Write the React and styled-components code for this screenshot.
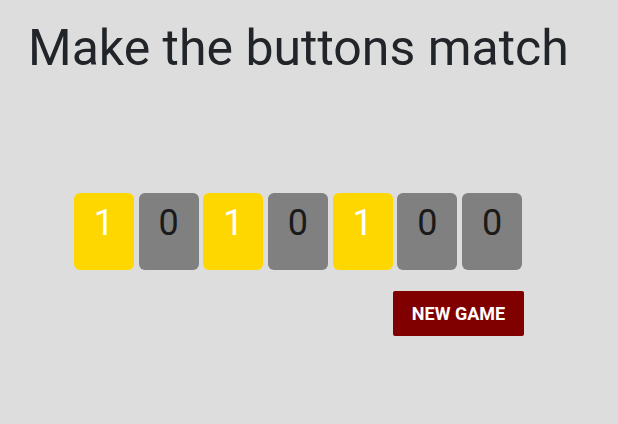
import styled, { createGlobalStyle } from "styled-components";

const GlobalStyle = createGlobalStyle`
  html, body {
    margin: 0;
    padding: 0;
    background: #dddddd;
    font-family: Roboto, "Liberation Sans", sans-serif;
  }
`;

const Page = styled.div`
  width: 618px;
  height: 424px;
  box-sizing: border-box;
  padding: 18px 0 0 28px;
`;

const Heading = styled.h1`
  margin: 0;
  font-size: 50px;
  font-weight: 400;
  line-height: 60px;
  white-space: nowrap;
  color: #212529;
`;

const Board = styled.div`
  margin: 115px 0 0 46px;
  width: 448px;
  display: flex;
  flex-direction: column;
  align-items: flex-end;
  gap: 21px;
`;

const Tiles = styled.div`
  display: flex;
  gap: 4.7px;
`;

const Tile = styled.button`
  width: 60px;
  height: 77px;
  border: none;
  border-radius: 6px;
  padding: 9px 0 0;
  display: flex;
  justify-content: center;
  align-items: flex-start;
  font-family: inherit;
  font-size: 36px;
  font-weight: 400;
  line-height: 1.2;
  background: ${(p) => (p.on ? "#ffd700" : "#808080")};
  color: ${(p) => (p.on ? "#ffffff" : "#1a1a1a")};
  cursor: pointer;
`;

const NewGame = styled.button`
  width: 131px;
  height: 45px;
  margin-right: -2px;
  border: none;
  border-radius: 2px;
  background: #800000;
  color: #ffffff;
  font-family: inherit;
  font-size: 18px;
  font-weight: 700;
  text-transform: uppercase;
  cursor: pointer;
`;

const bits = [1, 0, 1, 0, 1, 0, 0];

export default function App() {
  return (
    <Page>
      <GlobalStyle />
      <Heading>Make the buttons match</Heading>
      <Board>
        <Tiles>
          {bits.map((b, i) => (
            <Tile key={`tile-${i}`} on={b === 1 ? 1 : 0}>
              {b}
            </Tile>
          ))}
        </Tiles>
        <NewGame>New Game</NewGame>
      </Board>
    </Page>
  );
}
